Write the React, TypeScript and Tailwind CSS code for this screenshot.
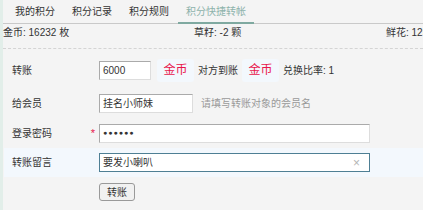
const font = { fontFamily: '"Liberation Sans", "Noto Sans CJK SC", sans-serif' };

const tabs = ['我的积分', '积分记录', '积分规则', '积分快捷转帐'];

function CoinTag() {
  return (
    <span className="flex h-[23px] w-[37px] items-center justify-center rounded-[3px] bg-[#f3f8fd] text-[12px] text-[#e8154b]">
      金币
    </span>
  );
}

function FormRow({
  label, required, highlight, className = '', children,
}: {
  label: string;
  required?: boolean;
  highlight?: boolean;
  className?: string;
  children: React.ReactNode;
}) {
  return (
    <div className={`flex items-center ${highlight ? 'bg-[#f3f8fd]' : ''} ${className}`}>
      <div className="flex w-[95px] flex-shrink-0 items-center justify-between pl-[8px] pr-[4px]">
        <span className="text-[10px] text-[#333]">{label}</span>
        {required && <span className="text-[11px] leading-none text-[#e8154b]">*</span>}
      </div>
      {children}
    </div>
  );
}

export default function App() {
  return (
    <div style={font} className="h-[210px] w-[423px] overflow-hidden border-l-[3px] border-[#e2eee9] bg-[#f4f4f4] text-[#333]">
      {/* Tabs */}
      <div className="flex h-[24px] gap-[1px] border-b border-[#c9c9c9] pl-[4px]">
        {tabs.map((t, i) => {
          const active = i === tabs.length - 1;
          return (
            <div
              key={t}
              className={`flex items-center px-[8px] text-[10px] ${
                active ? 'mb-[-1px] border-b-2 border-[#7fa9a0] text-[#8db2ab]' : 'text-[#333]'
              }`}
            >
              {t}
            </div>
          );
        })}
      </div>

      {/* Summary */}
      <div className="flex h-[17px] items-center text-[10px]">
        <span className="w-[191px] flex-shrink-0">金币: 16232 枚</span>
        <span className="w-[192px] flex-shrink-0">草籽: -2 颗</span>
        <span className="w-[192px] flex-shrink-0 whitespace-nowrap">鲜花: 125 朵</span>
      </div>
      <div className="mt-[7px] border-t border-dashed border-[#d4d4d4]" />

      {/* Form */}
      <div className="pt-[6px] pl-[1px]">
        <FormRow label="转账" className="h-[30px]">
          <div className="flex h-[19px] w-[52px] items-center border border-[#aaa] border-b-[#ddd] border-r-[#ddd] bg-white px-[3px] text-[10px]">
            6000
          </div>
          <div className="ml-[6px] flex items-center gap-[4px] text-[10px]">
            <CoinTag />
            <span>对方到账</span>
            <CoinTag />
            <span>兑换比率: 1</span>
          </div>
        </FormRow>

        <FormRow label="给会员" className="mt-[3px] h-[30px]">
          <div className="flex h-[19px] w-[94px] items-center border border-[#aaa] border-b-[#ddd] border-r-[#ddd] bg-white px-[3px] text-[10px]">
            挂名小师妹
          </div>
          <span className="ml-[8px] text-[10px] text-[#999]">请填写转账对象的会员名</span>
        </FormRow>

        <FormRow label="登录密码" required className="h-[30px]">
          <div className="flex h-[19px] w-[271px] items-center border border-[#aaa] border-b-[#ddd] border-r-[#ddd] bg-white px-[3px] text-[7px] tracking-[1px] text-[#333]">
            ●●●●●●
          </div>
        </FormRow>

        <FormRow label="转账留言" highlight className="h-[29px]">
          <div className="flex h-[19px] w-[271px] items-center justify-between border border-[#4e7f94] bg-white px-[3px] text-[10px]">
            <span>要发小喇叭</span>
            <span className="mr-[6px] text-[12px] leading-none text-[#b5b5b5]">×</span>
          </div>
        </FormRow>

        <div className="mt-[6px] pl-[95px]">
          <button className="flex h-[18px] w-[36px] items-center justify-center rounded-[3px] border border-[#999] bg-[#f1f1f1] text-[10px] text-[#333]">
            转账
          </button>
        </div>
      </div>
    </div>
  );
}
